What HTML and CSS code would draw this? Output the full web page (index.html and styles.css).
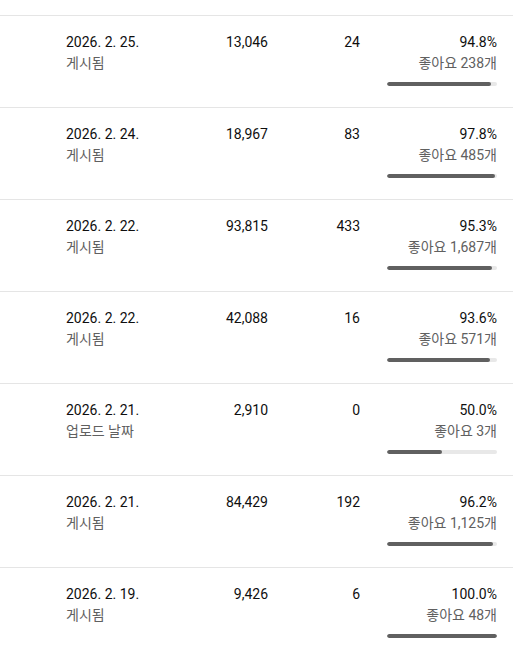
FILE: index.html
```html
<!DOCTYPE html>
<html lang="ko">

<head>
    <meta charset="UTF-8" />
    <meta name="viewport" content="width=device-width, initial-scale=1" />
    <title>콘텐츠</title>
    <link rel="stylesheet" href="styles.css">
</head>

<body>

    <div class="video-table">

        <div class="video-row">
            <div class="cell-date">
                <div class="date">2026. 2. 25.</div>
                <div class="status">게시됨</div>
            </div>
            <div class="cell-num">13,046</div>
            <div class="cell-num">24</div>
            <div class="cell-likes">
                <div class="pct">94.8%</div>
                <div class="likes">좋아요 238개</div>
                <div class="bar"><div class="bar-fill" style="width: 94.8%"></div></div>
            </div>
        </div>

        <div class="video-row">
            <div class="cell-date">
                <div class="date">2026. 2. 24.</div>
                <div class="status">게시됨</div>
            </div>
            <div class="cell-num">18,967</div>
            <div class="cell-num">83</div>
            <div class="cell-likes">
                <div class="pct">97.8%</div>
                <div class="likes">좋아요 485개</div>
                <div class="bar"><div class="bar-fill" style="width: 97.8%"></div></div>
            </div>
        </div>

        <div class="video-row">
            <div class="cell-date">
                <div class="date">2026. 2. 22.</div>
                <div class="status">게시됨</div>
            </div>
            <div class="cell-num">93,815</div>
            <div class="cell-num">433</div>
            <div class="cell-likes">
                <div class="pct">95.3%</div>
                <div class="likes">좋아요 1,687개</div>
                <div class="bar"><div class="bar-fill" style="width: 95.3%"></div></div>
            </div>
        </div>

        <div class="video-row">
            <div class="cell-date">
                <div class="date">2026. 2. 22.</div>
                <div class="status">게시됨</div>
            </div>
            <div class="cell-num">42,088</div>
            <div class="cell-num">16</div>
            <div class="cell-likes">
                <div class="pct">93.6%</div>
                <div class="likes">좋아요 571개</div>
                <div class="bar"><div class="bar-fill" style="width: 93.6%"></div></div>
            </div>
        </div>

        <div class="video-row">
            <div class="cell-date">
                <div class="date">2026. 2. 21.</div>
                <div class="status">업로드 날짜</div>
            </div>
            <div class="cell-num">2,910</div>
            <div class="cell-num">0</div>
            <div class="cell-likes">
                <div class="pct">50.0%</div>
                <div class="likes">좋아요 3개</div>
                <div class="bar"><div class="bar-fill" style="width: 50%"></div></div>
            </div>
        </div>

        <div class="video-row">
            <div class="cell-date">
                <div class="date">2026. 2. 21.</div>
                <div class="status">게시됨</div>
            </div>
            <div class="cell-num">84,429</div>
            <div class="cell-num">192</div>
            <div class="cell-likes">
                <div class="pct">96.2%</div>
                <div class="likes">좋아요 1,125개</div>
                <div class="bar"><div class="bar-fill" style="width: 96.2%"></div></div>
            </div>
        </div>

        <div class="video-row">
            <div class="cell-date">
                <div class="date">2026. 2. 19.</div>
                <div class="status">게시됨</div>
            </div>
            <div class="cell-num">9,426</div>
            <div class="cell-num">6</div>
            <div class="cell-likes">
                <div class="pct">100.0%</div>
                <div class="likes">좋아요 48개</div>
                <div class="bar"><div class="bar-fill" style="width: 100%"></div></div>
            </div>
        </div>

    </div>

</body>

</html>
```

FILE: styles.css
```css
html,
body {
    margin: 0;
    background: #ffffff;
}

body {
    font-family: Roboto, "Noto Sans CJK KR", sans-serif;
    font-size: 14px;
    line-height: 20px;
    color: #0f0f0f;
}

.video-table {
    padding-top: 15px;
}

/* eine Zeile pro Video */
.video-row {
    display: grid;
    grid-template-columns: 120px 82px 92px 137px;
    height: 75px;
    padding: 16px 16px 0 66px;
    border-top: 1px solid #e5e5e5;
}

.status,
.likes {
    color: #606060;
    margin-top: 1px;
}

.cell-num {
    text-align: right;
}

.cell-likes {
    display: flex;
    flex-direction: column;
    align-items: flex-end;
}

.bar {
    width: 110px;
    height: 4px;
    margin-top: 9px;
    border-radius: 2px;
    background: #e8e8e8;
    overflow: hidden;
}

.bar-fill {
    height: 100%;
    border-radius: 2px;
    background: #606060;
}
```
